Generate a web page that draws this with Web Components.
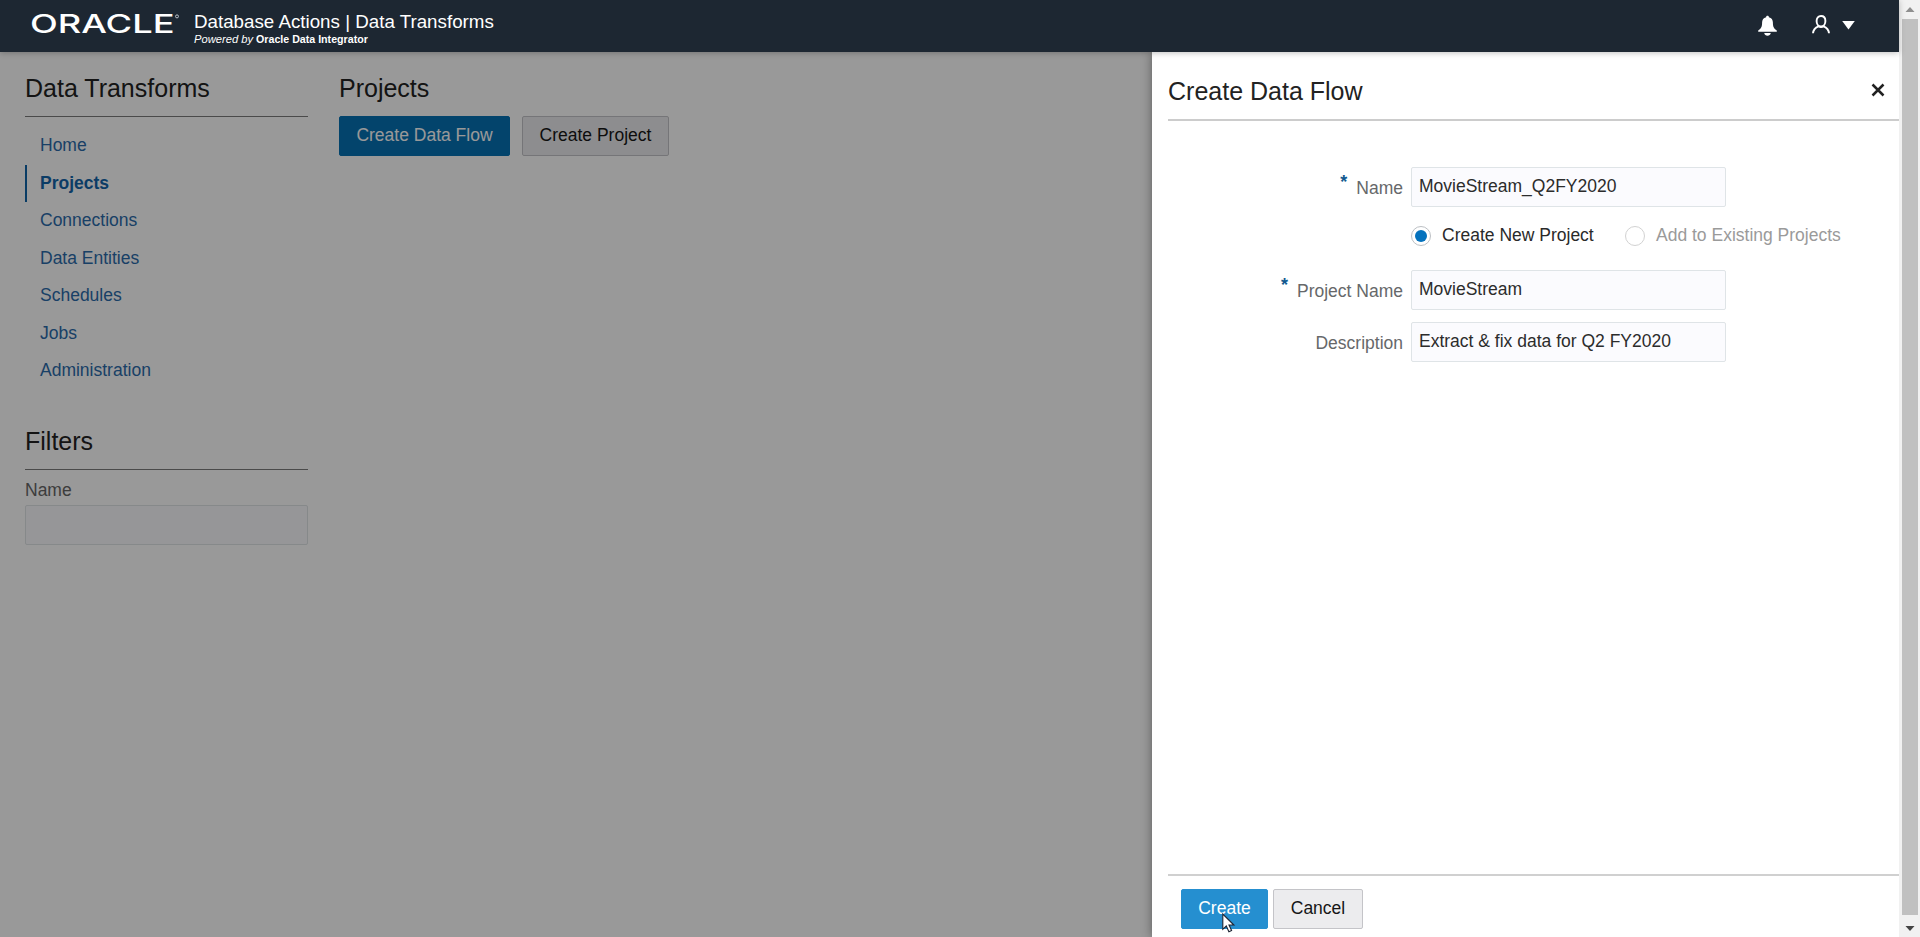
<!DOCTYPE html>
<html lang="en">
<head>
<meta charset="utf-8">
<title>Data Transforms</title>
<style>
body { margin: 0; overflow: hidden; font-family: "Liberation Sans", Arial, sans-serif; font-size: 17.5px; color: #222; background: #fff; }
</style>
</head>
<body>
<dt-app></dt-app>
<script>
const define = (name, html) => customElements.define(name, class extends HTMLElement {
  constructor() {
    super();
    const t = document.createElement('template');
    t.innerHTML = typeof html === 'function' ? html(this) : html;
    this.attachShadow({ mode: 'open' }).appendChild(t.content.cloneNode(true));
  }
});

define('dt-logo', `
<style>:host{display:block;width:150px;height:30px} svg{display:block;overflow:visible}</style>
<svg width="150" height="30" viewBox="0 0 150 30" aria-label="Oracle">
  <text x="-1" y="22.6" textLength="144.500" lengthAdjust="spacingAndGlyphs" font-family="Inter, sans-serif" font-size="25.500" font-weight="500" fill="#fff">ORACLE</text>
  <circle cx="146" cy="6.4" r="1.5" fill="none" stroke="#b9bfc6" stroke-width="1"/>
</svg>`);

define('dt-header', `
<style>
:host{display:flex;box-sizing:border-box;height:52px;background:#1d2732;color:#fff;padding-left:31px;box-shadow:0 1px 6px rgba(0,0,0,.25);position:relative;z-index:3}
dt-logo{margin-top:10px}
.t{margin-left:13px;flex:1;padding-top:9px;white-space:nowrap}
.a{font-size:18.75px;line-height:25px;height:23px}
.b{font-size:10.65px;line-height:14px;font-weight:bold}
i{font-weight:normal;font-size:11.2px}
.icons{display:flex;padding:15px 44px 0 0}
svg{display:block}
.user{margin-left:35px}.caret{margin:5px 0 0 12px}
</style>
<dt-logo></dt-logo>
<div class="t"><div class="a">Database Actions | Data Transforms</div><div class="b"><i>Powered by</i> Oracle Data Integrator</div></div>
<div class="icons">
<svg width="19" height="21" viewBox="0 0 19 21" fill="#fff"><path d="M9.5 .8c-.9 0-1.4.6-1.4 1.4-2.7.6-4 2.6-4 5.3 0 4.300-.9 6-3.900 8.100v1.200h18.600v-1.200c-3-2.100-3.900-3.800-3.900-8.100 0-2.700-1.300-4.700-4-5.300 0-.8-.5-1.400-1.400-1.400zM6.200 18c.4 1.700 1.600 2.700 3.300 2.700s2.900-1 3.300-2.700z"/></svg>
<svg class="user" width="18" height="19" viewBox="0 0 18 19" fill="none" stroke="#fff" stroke-width="1.900"><path d="M9 1C6.300 1 4.600 3.100 4.600 6s1.700 5.500 4.400 5.500 4.400-2.600 4.400-5.500S11.700 1 9 1z"/><path d="M1 18.300c.3-3.900 1.900-5.400 5.500-6.900 1.600.8 3.400.8 5 0 3.600 1.500 5.200 3 5.500 6.900" /></svg>
<svg class="caret" width="13" height="10" viewBox="0 0 13 10"><path d="M.2 1h12.600L6.500 9.500z" fill="#fff"/></svg>
</div>`);

define('dt-heading', `
<style>:host{display:block;font-size:25px;line-height:30px;color:#222;white-space:nowrap}</style><slot></slot>`);

define('dt-nav-item', `
<style>:host{display:block;box-sizing:border-box;height:37.5px;line-height:37px;padding-left:15px;color:#2b6bab}
:host([active]){font-weight:bold;padding-left:13px;border-left:2px solid #1064a8;color:#1365ab}</style><slot></slot>`);

define('dt-button', `
<style>:host{display:block;box-sizing:border-box;height:40px;line-height:37px;text-align:center;border:1px solid #c4c4c8;border-radius:2px;background:#ececee;color:#161616;white-space:nowrap}
:host([kind=primary]){background:#0572b5;border-color:#0572b5;color:#fff}
:host([kind=hover]){background:#258fd0;border-color:#258fd0;color:#fff}</style><slot></slot>`);

define('dt-input', `
<style>:host{display:block;box-sizing:border-box;height:40px;line-height:36px;padding-left:7px;border:1px solid #dfe4e7;border-radius:2px;background:#fbfbfe;color:#2c2c2c;white-space:nowrap}</style><slot></slot>`);

define('dt-sidebar', `
<style>
:host{display:block;width:283px;padding:15px 0 0 25px}
dt-heading{height:43px;padding-top:6px;border-bottom:1px solid #7c7c7c}
nav{padding-top:10px}
.f{margin-top:30px}
label{display:block;line-height:20px;margin:10px 0 5px;color:#666}
</style>
<dt-heading>Data Transforms</dt-heading>
<nav><slot></slot></nav>
<div class="f"><dt-heading>Filters</dt-heading><label>Name</label><dt-input></dt-input></div>`);

define('dt-main', `
<style>:host{display:block;padding:21px 0 0 31px;flex:1}
.r{display:flex;gap:12px;margin-top:13px}
.x{width:171px}.y{width:147px}</style>
<dt-heading>Projects</dt-heading>
<div class="r"><dt-button class="x" kind="primary">Create Data Flow</dt-button><dt-button class="y">Create Project</dt-button></div>`);

define('dt-field', el => `
<style>:host{display:grid;grid-template-columns:235px 315px;column-gap:8px;height:40px}
label{display:flex;justify-content:flex-end;line-height:42px;color:#66686a}
b{color:#11598f;font-weight:bold;font-size:18px;line-height:31px;margin-right:9px}
label span{white-space:nowrap}</style>
<label>${el.hasAttribute('required') ? '<b>*</b>' : ''}<span>${el.getAttribute('label')}</span></label>
<dt-input><slot></slot></dt-input>`);

define('dt-radio', `
<style>:host{display:flex;align-items:center;height:20px;line-height:20px;white-space:nowrap;color:#2a2a2a}
i{box-sizing:border-box;width:20px;height:20px;border:1px solid #bcc0c4;border-radius:50%;background:#fff;margin-right:11px;display:grid;place-items:center}
:host([checked]) i::after{content:"";width:12px;height:12px;border-radius:50%;background:#0572bd}
:host([disabled]){color:#9a9a9a}:host([disabled]) i{border-color:#d2d2d2}
span{display:block;padding-bottom:2px}</style><i></i><span><slot></slot></span>`);

define('dt-drawer', `
<style>
:host{display:flex;flex-direction:column;box-sizing:border-box;width:747px;background:#fff;padding-left:16px;box-shadow:0 0 10px rgba(0,0,0,.4);clip-path:inset(0 0 0 -14px)}
header{display:flex;justify-content:space-between;height:67px;border-bottom:2px solid #ccc}
dt-heading{padding-top:24px}
header svg{margin:31px 14px 0 0}
main{flex:1;padding-top:46px}
dt-field.p{margin-top:24px}dt-field.d{margin-top:12px}
.radios{display:flex;margin:19px 0 0 243px}
.radios dt-radio:first-child{width:214px}
footer{display:flex;gap:5px;border-top:2px solid #d0d0d0;height:63px;padding-left:13px;box-sizing:border-box}
footer dt-button{margin-top:13px}
.c{width:87px}.n{width:90px}
</style>
<header><dt-heading>Create Data Flow</dt-heading><svg width="14" height="14" viewBox="0 0 14 14" stroke="#222" stroke-width="2.500"><path d="M1.500 1.500l11 11M12.500 1.500l-11 11"/></svg></header>
<main>
<dt-field label="Name" required>MovieStream_Q2FY2020</dt-field>
<div class="radios"><dt-radio checked>Create New Project</dt-radio><dt-radio disabled>Add to Existing Projects</dt-radio></div>
<dt-field class="p" label="Project Name" required>MovieStream</dt-field>
<dt-field class="d" label="Description">Extract &amp; fix data for Q2 FY2020</dt-field>
</main>
<footer><dt-button class="c" kind="hover">Create</dt-button><dt-button class="n">Cancel</dt-button></footer>`);

define('dt-scrollbar', `
<style>:host{display:flex;flex-direction:column;align-items:center;width:21px;height:937px;background:#f1f1f1}
div{flex:1;width:16px;background:#c0c0c0}
svg{display:block}</style>
<svg width="10" height="19"><path d="M.5 12h9L5 7z" fill="#8f8f8f"/></svg><div></div>
<svg width="10" height="22"><path d="M.5 11h9L5 16z" fill="#444"/></svg>`);

define('dt-cursor', `
<style>:host{display:block;width:14px;height:21px}svg{display:block}</style>
<svg width="14" height="21" viewBox="0 0 14 21"><path d="M.8 1v15.300l3.500-3.300 2.600 5.700 2.700-1.200-2.600-5.500h4.900z" fill="#fff" stroke="#1d2433" stroke-width="1.100"/></svg>`);

define('dt-app', `
<style>
:host{display:flex;width:1920px;height:937px;overflow:hidden;position:relative}
.app{width:1899px;display:flex;flex-direction:column}
.body{flex:1;display:flex;min-height:0}
.page{display:flex;flex:1;position:relative}
.page::after{content:"";position:absolute;inset:0;background:rgba(0,0,0,.4)}
dt-drawer{position:relative}
dt-cursor{position:absolute;left:1222px;top:913px}
</style>
<div class="app"><dt-header></dt-header>
<div class="body"><div class="page">
<dt-sidebar>
<dt-nav-item>Home</dt-nav-item><dt-nav-item active>Projects</dt-nav-item><dt-nav-item>Connections</dt-nav-item><dt-nav-item>Data Entities</dt-nav-item><dt-nav-item>Schedules</dt-nav-item><dt-nav-item>Jobs</dt-nav-item><dt-nav-item>Administration</dt-nav-item>
</dt-sidebar><dt-main></dt-main></div>
<dt-drawer></dt-drawer></div></div>
<dt-scrollbar></dt-scrollbar><dt-cursor></dt-cursor>`);
</script>
</body>
</html>
